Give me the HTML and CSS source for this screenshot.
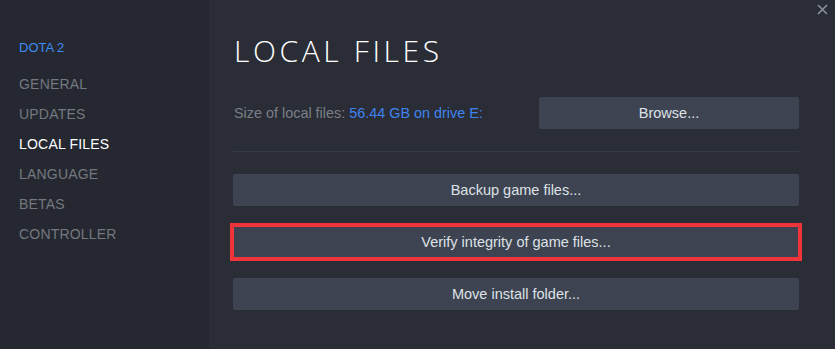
FILE: index.html
```html
<!DOCTYPE html>
<html>
<head>
    <meta charset="UTF-8">
    <title>DOTA 2 - Properties</title>
    <link rel="stylesheet" href="styles.css">
</head>
<body>
    <div class="properties-window">
        <div class="sidebar">
            <div class="game-title">DOTA 2</div>
            <ul class="nav-list">
                <li class="nav-item">GENERAL</li>
                <li class="nav-item">UPDATES</li>
                <li class="nav-item active">LOCAL FILES</li>
                <li class="nav-item">LANGUAGE</li>
                <li class="nav-item">BETAS</li>
                <li class="nav-item">CONTROLLER</li>
            </ul>
        </div>
        <div class="content">
            <button class="close-button" aria-label="Close">
                <svg width="11" height="11" viewBox="0 0 11 11">
                    <path d="M1 1 L10 10 M10 1 L1 10" stroke="#8b9098" stroke-width="1.6" fill="none"/>
                </svg>
            </button>
            <h1 class="page-title">LOCAL FILES</h1>
            <div class="size-row">
                <div class="size-text">Size of local files: <span class="size-value">56.44 GB on drive E:</span></div>
                <button class="action-button browse-button">Browse...</button>
            </div>
            <div class="divider"></div>
            <div class="actions">
                <button class="action-button">Backup game files...</button>
                <button class="action-button highlighted">Verify integrity of game files...</button>
                <button class="action-button">Move install folder...</button>
            </div>
        </div>
    </div>
</body>
</html>
```

FILE: styles.css
```css
* {
    margin: 0;
    padding: 0;
    box-sizing: border-box;
    font-family: 'Liberation Sans', Arial, sans-serif;
}

body {
    width: 835px;
    height: 349px;
    overflow: hidden;
    background-color: #2a2d36;
}

.properties-window {
    display: flex;
    height: 349px;
}

.sidebar {
    width: 209px;
    flex-shrink: 0;
    background-color: #252830;
    padding: 41px 0 0 19px;
}

.game-title {
    color: #3c8cf2;
    font-size: 13px;
    line-height: 13px;
    margin-bottom: 15px;
}

.nav-list {
    list-style: none;
}

.nav-item {
    color: #74787f;
    font-size: 14px;
    line-height: 30px;
    letter-spacing: 0.2px;
}

.nav-item.active {
    color: #ffffff;
    font-weight: 500;
}

.content {
    position: relative;
    flex: 1;
    padding: 0 36px 0 24px;
}

.close-button {
    position: absolute;
    top: 4px;
    right: 7px;
    background: none;
    border: none;
    width: 11px;
    height: 11px;
    display: flex;
}

.page-title {
    font-family: 'Open Sans', sans-serif;
    font-weight: 300;
    font-size: 30px;
    line-height: 30px;
    letter-spacing: 3.6px;
    color: #ffffff;
    margin: 36px 0 0 1px;
}

.size-row {
    display: flex;
    justify-content: space-between;
    align-items: center;
    margin-top: 31px;
}

.size-text {
    color: #7b7f86;
    font-size: 14.4px;
    padding-left: 1px;
}

.size-value {
    color: #3f84f1;
}

.action-button {
    background-color: #3d4350;
    color: #dde2e7;
    border: none;
    border-radius: 2px;
    font-size: 14.5px;
    height: 32px;
    width: 100%;
}

.browse-button {
    width: 260px;
}

.divider {
    height: 1px;
    background-color: #353944;
    margin-top: 22px;
}

.actions {
    display: flex;
    flex-direction: column;
    gap: 20px;
    margin-top: 22px;
}

.action-button.highlighted {
    border-radius: 0;
    outline: 4px solid #ef3539;
    outline-offset: -1px;
}
```
